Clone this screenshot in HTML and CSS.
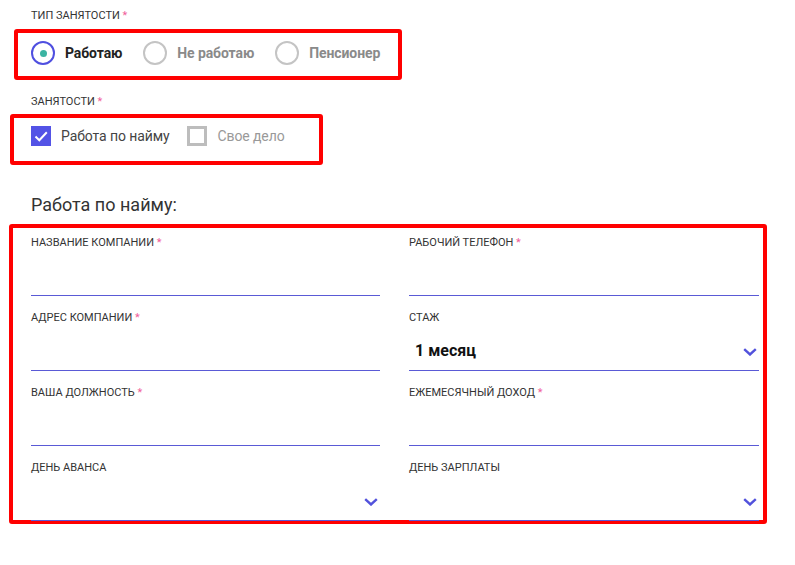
FILE: index.html
```html
<!DOCTYPE html>
<html lang="ru">
<head>
<meta charset="utf-8">
<link rel="stylesheet" href="styles.css">
</head>
<body>
<div class="page">
  <div class="label lbl-type">Тип занятости <span class="req">*</span></div>
  <div class="box box-radio">
    <label class="radio on"><span class="circle"><span class="dot"></span></span><span class="rtext">Работаю</span></label>
    <label class="radio"><span class="circle"></span><span class="rtext">Не работаю</span></label>
    <label class="radio"><span class="circle"></span><span class="rtext">Пенсионер</span></label>
  </div>

  <div class="label lbl-emp">Занятости <span class="req">*</span></div>
  <div class="box box-check">
    <label class="check on"><span class="cb"><svg width="20" height="20" viewBox="0 0 20 20"><path d="M4.5 10.5 L8.3 14.2 L15.8 6.2" fill="none" stroke="#fff" stroke-width="2"/></svg></span><span class="ctext">Работа по найму</span></label>
    <label class="check"><span class="cb"></span><span class="ctext">Свое дело</span></label>
  </div>

  <h2 class="heading">Работа по найму:</h2>

  <div class="box box-form">
    <div class="field">
      <div class="label">Название компании <span class="req">*</span></div>
      <div class="value"></div>
    </div>
    <div class="field">
      <div class="label">Рабочий телефон <span class="req">*</span></div>
      <div class="value"></div>
    </div>
    <div class="field">
      <div class="label">Адрес компании <span class="req">*</span></div>
      <div class="value"></div>
    </div>
    <div class="field">
      <div class="label">Стаж</div>
      <div class="value select"><span class="vtext">1 месяц</span><svg class="chev" width="14" height="8" viewBox="0 0 14 8"><path d="M1.2 1.2 L7 6.5 L12.8 1.2" fill="none" stroke="#5252dc" stroke-width="2.4"/></svg></div>
    </div>
    <div class="field">
      <div class="label">Ваша должность <span class="req">*</span></div>
      <div class="value"></div>
    </div>
    <div class="field">
      <div class="label">Ежемесячный доход <span class="req">*</span></div>
      <div class="value"></div>
    </div>
    <div class="field">
      <div class="label">День аванса</div>
      <div class="value select"><span class="vtext"></span><svg class="chev" width="14" height="8" viewBox="0 0 14 8"><path d="M1.2 1.2 L7 6.5 L12.8 1.2" fill="none" stroke="#5252dc" stroke-width="2.4"/></svg></div>
    </div>
    <div class="field">
      <div class="label">День зарплаты</div>
      <div class="value select"><span class="vtext"></span><svg class="chev" width="14" height="8" viewBox="0 0 14 8"><path d="M1.2 1.2 L7 6.5 L12.8 1.2" fill="none" stroke="#5252dc" stroke-width="2.4"/></svg></div>
    </div>
  </div>
</div>
</body>
</html>
```

FILE: styles.css
```css
* { box-sizing: border-box; }
html, body { margin: 0; padding: 0; background: #fff; }
body { font-family: Roboto, "Noto Sans", "Liberation Sans", sans-serif; color: #333; }
.page { width: 795px; height: 565px; position: relative; }

.label {
  font-size: 11px;
  line-height: 14px;
  text-transform: uppercase;
  color: #333;
  white-space: nowrap;
}
.req { color: #f0609a; }

.lbl-type { padding: 9px 0 0 31px; }
.lbl-emp { padding: 15px 0 0 31px; }

.box {
  border: 4px solid #ff0000;
  border-radius: 3px;
}

.box-radio {
  margin: 6px 0 0 14px;
  width: 388px;
  height: 51px;
  display: flex;
  align-items: center;
  padding: 0 0 3px 13px;
}
.radio { display: flex; align-items: center; margin-right: 21px; flex-shrink: 0; white-space: nowrap; }
.radio .circle {
  flex-shrink: 0;
  width: 24px; height: 24px;
  border: 2px solid #c4c4c4;
  border-radius: 50%;
  display: flex; align-items: center; justify-content: center;
}
.radio.on .circle { border-color: #4f4fe0; }
.radio .dot { width: 7px; height: 7px; border-radius: 50%; background: #3bb4a2; }
.rtext { margin-left: 10px; font-size: 14px; font-weight: 700; color: #8a8a8a; letter-spacing: -0.1px; }
.radio.on .rtext { color: #222; }

.box-check {
  margin: 5px 0 0 10px;
  width: 313px;
  height: 51px;
  display: flex;
  align-items: flex-start;
  padding: 8px 0 0 17px;
}
.check { display: flex; align-items: center; margin-right: 18px; white-space: nowrap; }
.cb {
  flex-shrink: 0;
  width: 20px; height: 20px;
  border: 3px solid #bdbdbd;
  display: block;
}
.check.on .cb { background: #5353e6; border: 0; }
.cb svg { display: block; }
.ctext { margin-left: 10px; font-size: 14px; color: #999; letter-spacing: -0.1px; }
.check.on .ctext { color: #444; }

.heading {
  margin: 0;
  padding: 29px 0 0 31px;
  font-size: 18px;
  line-height: 22px;
  font-weight: 400;
  color: #333;
}

.box-form {
  margin: 8px 0 0 9px;
  width: 758px;
  height: 300px;
  padding: 8px 4px 0 18px;
  display: grid;
  grid-template-columns: 349px 350px;
  column-gap: 29px;
  row-gap: 15px;
  align-content: start;
}
.field { height: 60px; display: flex; flex-direction: column; }
.value {
  flex: 1;
  border-bottom: 1px solid #5a5ad6;
  display: flex;
  align-items: flex-end;
  justify-content: space-between;
  padding: 0 2px 9px 6px;
}
.vtext { font-size: 16px; line-height: 20px; font-weight: 700; color: #111; }
.chev { display: block; margin-bottom: 5px; }
```
